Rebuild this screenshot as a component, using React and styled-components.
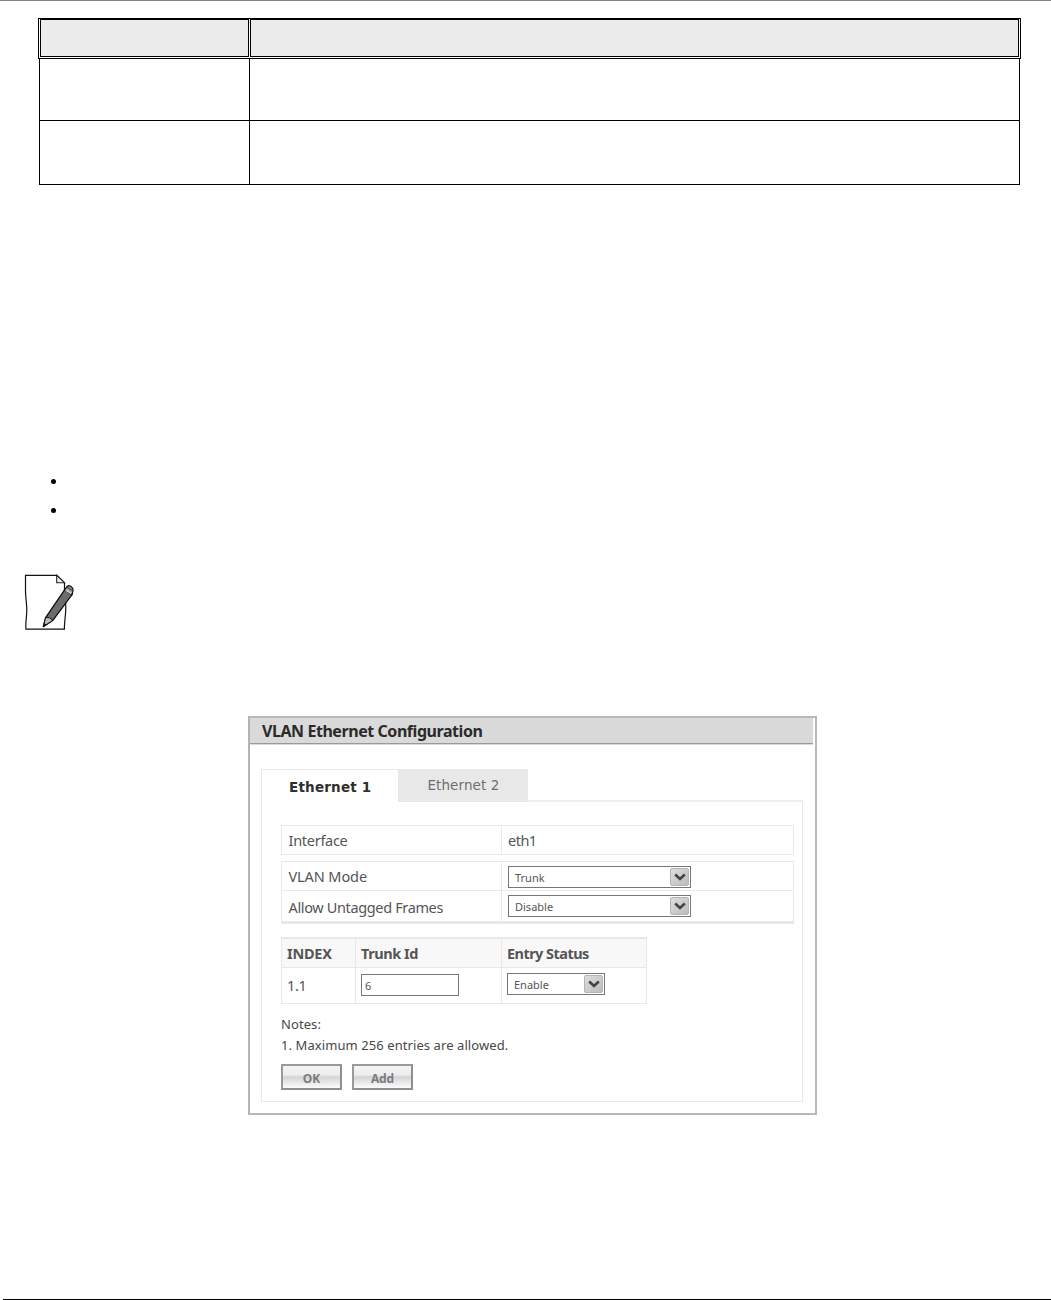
import React from "react";
import styled, { createGlobalStyle } from "styled-components";

const Global = createGlobalStyle`
  *, *::before, *::after { box-sizing: border-box; }
  body { margin: 0; background: #fff; }
`;

const Page = styled.main`
  display: flex;
  flex-direction: column;
  width: 1051px;
  height: 1300px;
  overflow: hidden;
  border-top: 1px solid #838383;
  background: #fff;
  color: #555;
  font-family: "Noto Sans", "Open Sans", sans-serif;
`;

const HeadRow = styled.div`
  display: flex;
  gap: 1px;
  width: 983px;
  height: 41px;
  margin: 17px 0 0 38px;
  padding: 0 1px 1px;
  border: 1px solid #000;
`;

const HeadCell = styled.div`
  width: ${(p) => p.$width}px;
  border: 1px solid #000;
  background: #ececec;
`;

const BodyRow = styled.div`
  display: flex;
  width: 981px;
  height: ${(p) => p.$height}px;
  margin-left: 39px;
  border: solid #000;
  border-width: 0 1px 1px;
`;

const BodyCell = styled.div`
  width: 210px;
  border-right: 1px solid #000;
`;

const Bullets = styled.ul`
  display: flex;
  flex-direction: column;
  gap: 24px;
  margin: 294px 0 0 51px;
  padding: 0;
  list-style: none;
`;

const Bullet = styled.li`
  width: 5px;
  height: 5px;
  border-radius: 50%;
  background: #000;
`;

const NoteIcon = styled.svg`
  display: block;
  flex: none;
  width: 52px;
  height: 60px;
  margin: 60px 0 0 24px;
`;

const Panel = styled.section`
  width: 569px;
  height: 399px;
  margin: 83px 0 0 248px;
  border: 2px solid #b8b8b8;
  border-left-color: #b4b4b4;
  flex: none;
`;

const PanelTitle = styled.h1`
  width: 563px;
  height: 26px;
  margin: 0;
  padding-left: 12px;
  border-bottom: 1px solid #999;
  background: #dadada;
  color: #2b2b2b;
  font-size: 16px;
  font-weight: 700;
  line-height: 26px;
  letter-spacing: -0.44px;
  white-space: nowrap;
  box-shadow: 0 1px 0 #dcdcdc;
`;

const Tabs = styled.div`
  display: flex;
  height: 33px;
  margin: 25px 0 0 11px;
  font-family: "DejaVu Sans", Verdana, sans-serif;
`;

const Tab = styled.div`
  width: ${(p) => (p.$active ? 137 : 130)}px;
  height: 33px;
  padding-left: ${(p) => (p.$active ? 27 : 29.5)}px;
  border: solid #e9e9e9;
  border-width: ${(p) => (p.$active ? "1px 0 0 1px" : "0")};
  background: ${(p) => (p.$active ? "#fff" : "#e8e8e8")};
  color: ${(p) => (p.$active ? "#2e2e2e" : "#6f6f6f")};
  font-size: 13.5px;
  font-weight: ${(p) => (p.$active ? 700 : 400)};
  line-height: ${(p) => (p.$active ? 34 : 33)}px;
  letter-spacing: ${(p) => (p.$active ? "0.2px" : "0.08px")};
  white-space: nowrap;
`;

const TabEdge = styled.div`
  flex: none;
  align-self: flex-end;
  width: 275px;
  height: 2px;
  background: #eee;
`;

const TabBody = styled.div`
  width: 542px;
  height: 300px;
  margin-left: 11px;
  padding: 23px 0 0 19px;
  border: solid #e9e9e9;
  border-width: 0 1px 1px;
`;

const Fields = styled.div`
  width: 513px;
  margin-top: ${(p) => p.$top || 0}px;
  border: 1px solid #e8e8e8;
  border-bottom-width: ${(p) => (p.$heavy ? 3 : 1)}px;
`;

const Field = styled.div`
  display: flex;
  height: ${(p) => p.$height}px;
  & + & { border-top: 1px solid #e8e8e8; }
`;

const Label = styled.div`
  width: 220px;
  padding-left: 6.5px;
  border-right: 1px solid #e8e8e8;
  font-size: 14.5px;
  line-height: ${(p) => p.$line || 28}px;
  letter-spacing: ${(p) => p.$spacing || -0.3}px;
  white-space: nowrap;
`;

const Value = styled.div`
  display: flex;
  align-items: flex-start;
  padding: ${(p) => p.$pad || "0 0 0 6px"};
  font-size: 14.5px;
  line-height: 28px;
  letter-spacing: -0.5px;
`;

const SelectBox = styled.div`
  display: flex;
  justify-content: space-between;
  width: ${(p) => p.$width}px;
  height: 22px;
  padding: 1px 1px 1px 6px;
  border: 1px solid #777;
  background: #fff;
  color: #555;
  font-size: 11px;
  line-height: 20px;
  letter-spacing: ${(p) => p.$spacing || 0}px;
`;

const Arrow = styled.span`
  display: flex;
  align-items: center;
  justify-content: center;
  width: 19px;
  height: 18px;
  border: 1px solid #b5b5b5;
  border-radius: 2px;
  background: linear-gradient(135deg, #dedede, #bcbcbc);
`;

const Grid = styled.div`
  display: grid;
  grid-template-columns: 74px 146px 144px;
  grid-template-rows: 29px 35px;
  width: 366px;
  margin-top: 13px;
  border: 1px solid #e8e8e8;
  border-top-width: 2px;
`;

const GridCell = styled.div`
  padding: ${(p) => p.$pad || "0 0 0 5px"};
  border: solid #e8e8e8;
  border-width: ${(p) => `0 ${p.$last ? 0 : 1}px ${p.$head ? 1 : 0}px 0`};
  background: ${(p) => (p.$head ? "#f8f8f8" : "#fff")};
  font-size: 14.5px;
  font-weight: ${(p) => (p.$head ? 700 : 400)};
  line-height: ${(p) => (p.$head ? 29 : 35)}px;
  letter-spacing: ${(p) => p.$spacing || -0.4}px;
  white-space: nowrap;
`;

const TextInput = styled.div`
  width: 98px;
  height: 22px;
  padding-left: 3px;
  border: 1px solid #777;
  font-size: 11px;
  line-height: 21px;
`;

const Note = styled.p`
  margin: ${(p) => p.$top || 0}px 0 0;
  color: #474747;
  font-size: 13px;
  line-height: 21px;
  letter-spacing: ${(p) => p.$spacing || 0.08}px;
`;

const Actions = styled.div`
  display: flex;
  gap: 10px;
  margin-top: 8px;
`;

const Button = styled.button`
  width: 61px;
  height: 26px;
  padding: 3px 0 0;
  border: 2px solid #8f8f8f;
  border-top-color: #9a9a9a;
  border-left-color: #9a9a9a;
  border-radius: 0;
  background: linear-gradient(#f4f4f4 0%, #ededed 40%, #d4d4d4 50%, #f3f3f3 88%, #fafafa 100%);
  color: #7c7c7c;
  font: 700 12px/19px "Noto Sans", sans-serif;
  letter-spacing: -0.1px;
`;

const Footer = styled.footer`
  height: 1px;
  margin: auto 0 0 3px;
  flex: none;
  background: #000;
`;

const Select = ({ value, width, spacing }) => (
  <SelectBox $width={width} $spacing={spacing}>
    {value}
    <Arrow>
      <svg width="12" height="9" viewBox="0 0 12 9">
        <path d="M1.2 1.6 6 5.9 10.8 1.6" fill="none" stroke="#444" strokeWidth="2.7" />
      </svg>
    </Arrow>
  </SelectBox>
);

export default function App() {
  return (
    <Page>
      <Global />
      <HeadRow>
        <HeadCell $width={209} />
        <HeadCell $width={769} />
      </HeadRow>
      <BodyRow $height={62}><BodyCell /></BodyRow>
      <BodyRow $height={64}><BodyCell /></BodyRow>

      <Bullets>
        <Bullet />
        <Bullet />
      </Bullets>

      <NoteIcon viewBox="24 573 52 60">
        <path d="M25.5 575.3H57l7.5 7.7v7c.4 7 1.7 14 1.2 21-.3 6-1.4 12-1.3 18.2H26c-.8-6 .9-13 .8-20-.1-6-1.3-12-1.3-18Z" fill="#fff" stroke="#111" strokeWidth="1.2" />
        <path d="M56.7 575.3v7.4h7.8Z" fill="#eee" stroke="#222" strokeWidth="1.1" />
        <path d="M43.3 626.6 45.6 617.6 64.6 589.8 72.1 594.6 52.8 620.4Z" fill="#6c6c6c" stroke="#111" strokeWidth="1.3" strokeLinejoin="round" />
        <path d="M43.3 626.6 45.6 617.6 49.3 617.6 52.8 620.4Z" fill="#bbb" stroke="#111" strokeWidth="1" strokeLinejoin="round" />
        <path d="M64.6 589.8 67.2 586.3C69 584.6 73.6 587 73.1 590.2L72.1 594.6Z" fill="#999" stroke="#111" strokeWidth="1.2" strokeLinejoin="round" />
        <path d="M65.6 590 71.4 593.5" stroke="#d0d0d0" strokeWidth="1.6" />
        <path d="M67.2 587.3 72.6 590.6" stroke="#222" strokeWidth=".9" />
        <path d="m43.2 626.8 1.1-4 2 2Z" fill="#111" />
      </NoteIcon>

      <Panel>
        <PanelTitle>VLAN Ethernet Configuration</PanelTitle>
        <Tabs>
          <Tab $active>Ethernet 1</Tab>
          <Tab>Ethernet 2</Tab>
          <TabEdge />
        </Tabs>
        <TabBody>
          <Fields>
            <Field $height={28}>
              <Label $spacing={-0.28}>Interface</Label>
              <Value>eth1</Value>
            </Field>
          </Fields>
          <Fields $top={6} $heavy>
            <Field $height={28}>
              <Label $spacing={-0.1}>VLAN Mode</Label>
              <Value $pad="4px 0 0 6px"><Select value="Trunk" width={183} /></Value>
            </Field>
            <Field $height={31}>
              <Label $line={32} $spacing={-0.36}>Allow Untagged Frames</Label>
              <Value $pad="4px 0 0 6px"><Select value="Disable" width={183} /></Value>
            </Field>
          </Fields>
          <Grid>
            <GridCell $head $spacing={-0.25}>INDEX</GridCell>
            <GridCell $head $spacing={-0.45}>Trunk Id</GridCell>
            <GridCell $head $last $spacing={-0.55}>Entry Status</GridCell>
            <GridCell>1.1</GridCell>
            <GridCell $pad="6px 0 0 5px"><TextInput>6</TextInput></GridCell>
            <GridCell $last $pad="5px 0 0 5px"><Select value="Enable" width={98} /></GridCell>
          </Grid>
          <Note $top={10}>Notes:</Note>
          <Note>1. Maximum 256 entries are allowed.</Note>
          <Actions>
            <Button>OK</Button>
            <Button>Add</Button>
          </Actions>
        </TabBody>
      </Panel>
      <Footer />
    </Page>
  );
}
